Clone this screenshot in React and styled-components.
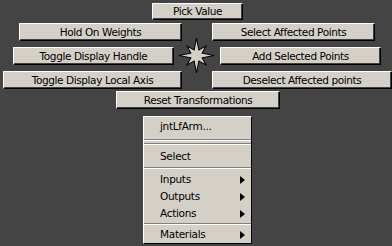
import React from "react";
import styled, { createGlobalStyle } from "styled-components";

const Global = createGlobalStyle`
  html, body { margin: 0; padding: 0; background: #444444; }
  body { width: 392px; height: 246px; overflow: hidden; }
  * { box-sizing: border-box; }
`;

const Screen = styled.div`
  position: relative;
  width: 392px;
  height: 246px;
  background: #444444;
  padding-top: 3px;
  display: flex;
  flex-direction: column;
  font-family: "DejaVu Sans", Verdana, sans-serif;
  font-size: 10.5px;
  color: #000;
`;

const Row = styled.div`
  display: grid;
  grid-template-columns: 196px 196px;
  height: ${(p) => p.$h}px;
  margin-top: ${(p) => p.$mt || 0}px;
`;

const SingleRow = styled.div`
  display: flex;
  height: ${(p) => p.$h}px;
  margin-top: ${(p) => p.$mt || 0}px;
  padding-left: ${(p) => p.$left}px;
`;

const Side = styled.div`
  display: flex;
  justify-content: ${(p) => (p.$end ? "flex-end" : "flex-start")};
  padding-left: ${(p) => (p.$end ? 0 : p.$inset)}px;
  padding-right: ${(p) => (p.$end ? p.$inset : 0)}px;
`;

const Btn = styled.div`
  width: ${(p) => p.$w}px;
  height: 100%;
  background: #d4d0c8;
  border-top: 1px solid #ffffff;
  border-left: 1px solid #ffffff;
  border-right: 1px solid #000000;
  border-bottom: 1px solid #000000;
  box-shadow: inset -1px -1px 0 #404040;
  display: flex;
  align-items: center;
  justify-content: center;
  white-space: nowrap;
  line-height: 1;
  letter-spacing: -0.4px;
`;

const Star = styled.svg`
  position: absolute;
  left: 178px;
  top: 37px;
`;

const Menu = styled.div`
  margin-top: 7px;
  margin-left: 143px;
  width: 109px;
  height: 128px;
  background: #d4d0c8;
  border-top: 1px solid #ffffff;
  border-left: 1px solid #ffffff;
  border-right: 1px solid #000000;
  border-bottom: 1px solid #000000;
  display: flex;
  flex-direction: column;
`;

const Item = styled.div`
  height: ${(p) => p.$h || 17}px;
  display: flex;
  align-items: center;
  justify-content: space-between;
  padding-left: 16px;
  padding-right: 6px;
  white-space: nowrap;
  line-height: 1;
  letter-spacing: -0.3px;
`;

const Arrow = styled.span`
  width: 0;
  height: 0;
  border-left: 5px solid #000;
  border-top: 4px solid transparent;
  border-bottom: 4px solid transparent;
`;

const Sep = styled.div`
  height: ${(p) => p.$h}px;
  display: flex;
  flex-direction: column;
  justify-content: center;
  &::before {
    content: "";
    display: block;
    height: 1px;
    background: #808080;
  }
  &::after {
    content: "";
    display: block;
    height: 1px;
    background: #ffffff;
  }
`;

const DoubleSep = styled.div`
  height: 12px;
  display: flex;
  flex-direction: column;
  justify-content: center;
  gap: 2px;
`;

const Line = styled.div`
  height: 2px;
  border-top: 1px solid #808080;
  border-bottom: 1px solid #ffffff;
`;

const starPoints =
  "18,1 20.3,12.5 27.2,8.8 23.5,15.7 35,18 23.5,20.3 27.2,27.2 20.3,23.5 18,35 15.7,23.5 8.8,27.2 12.5,20.3 1,18 12.5,15.7 8.8,8.8 15.7,12.5";

const submenus = ["Inputs", "Outputs", "Actions"];

export default function App() {
  return (
    <>
      <Global />
      <Screen>
        <SingleRow $h={17} $left={152}>
          <Btn $w={91}>Pick Value</Btn>
        </SingleRow>
        <Row $h={18} $mt={3}>
          <Side $end $inset={14}>
            <Btn $w={163}>Hold On Weights</Btn>
          </Side>
          <Side $inset={16}>
            <Btn $w={163}>Select Affected Points</Btn>
          </Side>
        </Row>
        <Row $h={18} $mt={6}>
          <Side $end $inset={22}>
            <Btn $w={161}>Toggle Display Handle</Btn>
          </Side>
          <Side $inset={24}>
            <Btn $w={161}>Add Selected Points</Btn>
          </Side>
        </Row>
        <Row $h={18} $mt={6}>
          <Side $end $inset={14}>
            <Btn $w={179}>Toggle Display Local Axis</Btn>
          </Side>
          <Side $inset={16}>
            <Btn $w={180}>Deselect Affected points</Btn>
          </Side>
        </Row>
        <SingleRow $h={18} $mt={2} $left={116}>
          <Btn $w={164}>Reset Transformations</Btn>
        </SingleRow>
        <Menu>
          <Item $h={19}>jntLfArm...</Item>
          <DoubleSep>
            <Line />
            <Line />
          </DoubleSep>
          <Item>Select</Item>
          <Sep $h={6} />
          {submenus.map((s) => (
            <Item key={s}>
              {s}
              <Arrow />
            </Item>
          ))}
          <Sep $h={4} />
          <Item>
            Materials
            <Arrow />
          </Item>
        </Menu>
        <Star width="37" height="37" viewBox="0 0 36 36">
          <polygon
            points={starPoints}
            fill="#d4d0c8"
            stroke="#000"
            strokeWidth="1"
            strokeLinejoin="miter"
          />
        </Star>
      </Screen>
    </>
  );
}
